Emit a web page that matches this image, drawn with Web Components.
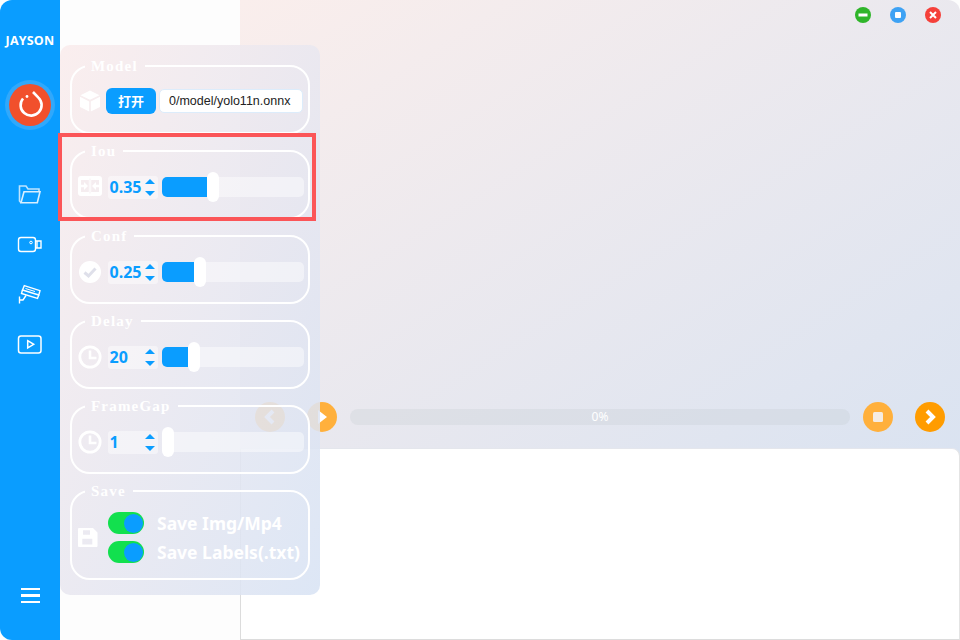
<!DOCTYPE html>
<html>
<head>
<meta charset="utf-8">
<title>Jayson</title>
<style>
  html, body { margin: 0; padding: 0; height: 100%; background: #fff; }
  body { font-family: "Noto Sans", "Noto Sans CJK SC", sans-serif; overflow: hidden; }
  app-window { width: 960px; height: 640px; }
</style>
</head>
<body>

<app-window>
  <side-bar slot="side"></side-bar>
  <settings-panel slot="panel">
    <param-group title="Model">
      <model-row></model-row>
    </param-group>
    <param-group title="Iou" highlight>
      <param-row icon="iou" value="0.35" ratio="0.35"></param-row>
    </param-group>
    <param-group title="Conf">
      <param-row icon="check" value="0.25" ratio="0.25"></param-row>
    </param-group>
    <param-group title="Delay">
      <param-row icon="clock" value="20" ratio="0.2"></param-row>
    </param-group>
    <param-group title="FrameGap">
      <param-row icon="clock" value="1" ratio="0"></param-row>
    </param-group>
    <param-group title="Save" tall>
      <save-row></save-row>
    </param-group>
  </settings-panel>
  <win-controls slot="controls"></win-controls>
  <player-bar slot="player"></player-bar>
  <log-panel slot="log"></log-panel>
</app-window>

<script>
const BLUE = '#0a9dff';

const ICONS = {
  cube: `<svg width="24" height="24" viewBox="0 0 24 24"><path d="M12 1.500 L21.500 6.200 L12 10.800 L2.500 6.200 Z M2 7.800 L11.200 12.400 L11.200 22.500 L2 18 Z M22 7.800 L12.800 12.400 L12.800 22.500 L22 18 Z" fill="#fff"/></svg>`,
  iou: `<svg style="margin-bottom:2px" width="24" height="20" viewBox="0 0 24 20"><path fill-rule="evenodd" fill="#fff" d="M3 0 H21 Q24 0 24 3 V17 Q24 20 21 20 H3 Q0 20 0 17 V3 Q0 0 3 0 Z M3 4 V16 H10.800 V4 Z M13.200 4 V16 H21 V4 Z M11.600 2.500 V17.500 H12.400 V2.500 Z"/><path fill="#fff" d="M3 8.700 H6 V6 L10 10 L6 14 V11.300 H3 Z M21 8.700 H18 V6 L14 10 L18 14 V11.300 H21 Z"/></svg>`,
  check: `<svg width="24" height="24" viewBox="0 0 24 24"><circle cx="12" cy="12" r="11" fill="#fff"/><path d="M6.500 12.500 L10.500 16 L17.500 8.500" fill="none" stroke="#dfe0ea" stroke-width="3"/></svg>`,
  clock: `<svg width="26" height="26" viewBox="0 0 26 26"><circle cx="13" cy="13" r="11" fill="none" stroke="#fff" stroke-width="3"/><path d="M13 6 V14 H20" fill="none" stroke="#fff" stroke-width="2.800"/></svg>`,
  save: `<svg width="20" height="19" viewBox="0 0 20 19"><path fill-rule="evenodd" fill="#fff" d="M0 1 Q0 0 1 0 H15 L19.500 4.500 V18 Q19.500 19 18.500 19 H1 Q0 19 0 18 Z M5 2.300 V6.700 H12 V2.300 Z M4.300 10.700 V16.500 H14.300 V10.700 Z"/></svg>`
};

class AppWindow extends HTMLElement {
  constructor() {
    super();
    this.attachShadow({ mode: 'open' });
    this.shadowRoot.innerHTML = `
      <style>
        :host { display: grid; grid-template-columns: 60px 180px 720px; position: relative; background: #fdfdfd; }
        .main { display: flex; flex-direction: column; height: 640px; }
        .stage {
          height: 456px; flex: none; display: flex; flex-direction: column; justify-content: space-between;
          background: linear-gradient(to bottom right, #faeeec, #dae3f1);
          border-top-right-radius: 12px;
        }
        .blank { background: #fdfdfd; }
        ::slotted(settings-panel) { position: absolute; left: 60px; top: 45px; }
      </style>
      <slot name="side"></slot>
      <div class="blank"></div>
      <div class="main">
        <div class="stage">
          <slot name="controls"></slot>
          <slot name="player"></slot>
        </div>
        <slot name="log"></slot>
      </div>
      <slot name="panel"></slot>
    `;
  }
}

class SideBar extends HTMLElement {
  constructor() {
    super();
    this.attachShadow({ mode: 'open' });
    this.shadowRoot.innerHTML = `
      <style>
        :host {
          display: flex; flex-direction: column; align-items: center; width: 60px; height: 640px;
          background: ${BLUE}; border-radius: 12px 0 0 12px; color: #fff;
        }
        .name { margin-top: 33px; font: bold 12.500px/16px "Open Sans", sans-serif; letter-spacing: 0.2px; }
        .logo {
          margin-top: 35px; width: 42px; height: 42px; border-radius: 50%; background: #f1502c;
          box-shadow: 0 0 0 4px #30a8fb;
        }
        .logo svg { display: block; }
        nav { margin-top: 51px; display: flex; flex-direction: column; gap: 16px; }
        nav svg { display: block; }
        .menu { margin-top: auto; margin-bottom: 37px; width: 19px; display: flex; flex-direction: column; gap: 4px; }
        .menu i { display: block; height: 2.500px; background: #fff; }
      </style>
      <div class="name">JAYSON</div>
      <div class="logo">
        <svg width="42" height="42" viewBox="0 0 42 42">
          <path d="M24 8 L29.400 13.600 A10.500 10.500 0 1 1 14 14.500" fill="none" stroke="#fff" stroke-width="2.600"/>
          <circle cx="18" cy="12.500" r="1.400" fill="#fff"/>
        </svg>
      </div>
      <nav>
        <svg width="34" height="34" viewBox="0 0 34 34" fill="none">
          <path d="M26 14 V12 H15 L13 9 H6.500 V24 L8 25.700" stroke="#bfe4ff" stroke-width="1.600"/>
          <path d="M11 14.700 H27 L24.300 25.700 H8 Z" stroke="#d8efff" stroke-width="1.600"/>
        </svg>
        <svg width="34" height="34" viewBox="0 0 34 34" fill="none" stroke="#fff" stroke-width="1.400">
          <rect x="5.500" y="10.500" width="17" height="14" rx="2.500"/>
          <path d="M22.500 14 H24 V21 H22.500 M24 14 H28 V21 H24"/>
          <circle cx="18" cy="15.500" r="1.300" stroke-width="1"/>
        </svg>
        <svg width="34" height="34" viewBox="0 0 34 34" fill="none" stroke="#fff" stroke-width="1.400">
          <path d="M11.300 8.700 L27 13.700 L25.800 18 L9.500 13 Z"/>
          <path d="M9.500 13 L8.500 16.500 L24.500 21.500 L25.800 18"/>
          <path d="M12.500 11.500 L22 14.500" stroke-width="1"/>
          <path d="M6.500 19.500 V26.500 M6.500 23 H10 L13 18.500"/>
        </svg>
        <svg width="34" height="34" viewBox="0 0 34 34" fill="none" stroke="#fff" stroke-width="1.500">
          <rect x="5.500" y="9" width="22.500" height="17" rx="2.500"/>
          <path d="M14.700 13.700 L20.700 17.300 L14.700 21 Z"/>
        </svg>
      </nav>
      <div class="menu"><i></i><i></i><i></i></div>
    `;
  }
}

class SettingsPanel extends HTMLElement {
  constructor() {
    super();
    this.attachShadow({ mode: 'open' });
    this.shadowRoot.innerHTML = `
      <style>
        :host {
          display: flex; flex-direction: column; gap: 8px; box-sizing: border-box;
          width: 260px; height: 550px; padding: 12px 10px 0;
          border-radius: 10px;
          background: linear-gradient(to bottom right, rgba(250,236,236,.88), rgba(216,227,244,.88));
        }
      </style>
      <slot></slot>
    `;
  }
}

class ParamGroup extends HTMLElement {
  constructor() {
    super();
    this.attachShadow({ mode: 'open' });
  }

  connectedCallback() {
    this.shadowRoot.innerHTML = `
      <style>
        :host { display: block; position: relative; height: 77px; flex: none; }
        :host([tall]) { height: 98px; }
        fieldset {
          box-sizing: border-box; margin: 0; height: 100%; padding: 0 4px 0 6px;
          border: 2px solid #fff; border-radius: 20px; min-width: 0;
        }
        legend {
          margin-left: 7px; padding: 2px 7px 2px 6px;
          font: bold 15px/14px "Liberation Serif", serif; letter-spacing: 1.200px; color: #fff;
        }
        .body { display: flex; align-items: center; height: 54px; }
        :host([tall]) .body { height: 75px; }
        :host([highlight])::after {
          content: ""; position: absolute; left: -12px; right: -6px; top: -9px; height: 88px;
          border: 4px solid #fb5558; box-sizing: border-box; pointer-events: none;
        }
      </style>
      <fieldset>
        <legend>${this.getAttribute('title')}</legend>
        <div class="body"><slot></slot></div>
      </fieldset>
    `;
  }
}

class ModelRow extends HTMLElement {
  constructor() {
    super();
    this.attachShadow({ mode: 'open' });
    this.shadowRoot.innerHTML = `
      <style>
        :host { display: flex; align-items: center; width: 100%; margin-bottom: 2px; }
        .icon { width: 24px; height: 24px; margin-right: 4px; flex: none; }
        .open {
          width: 50px; height: 26px; border-radius: 6px; background: ${BLUE}; color: #fff; flex: none;
          font: bold 13px/26px "Noto Sans CJK SC", sans-serif; text-align: center;
        }
        .path {
          margin-left: 3px; box-sizing: border-box; width: 144px; height: 24px; padding-left: 9px; flex: none;
          background: #fff; border: 1px solid #dcecfb; border-radius: 5px;
          font: 12.500px/22px "Liberation Sans", sans-serif; color: #222;
        }
      </style>
      <div class="icon">${ICONS.cube}</div>
      <div class="open">打开</div>
      <div class="path">0/model/yolo11n.onnx</div>
    `;
  }
}

class ParamRow extends HTMLElement {
  constructor() {
    super();
    this.attachShadow({ mode: 'open' });
  }

  connectedCallback() {
    const icon = this.getAttribute('icon');
    const value = this.getAttribute('value');
    const ratio = parseFloat(this.getAttribute('ratio'));
    this.shadowRoot.innerHTML = `
      <style>
        :host { display: flex; align-items: center; width: 100%; }
        .icon { width: 24px; height: 26px; flex: none; display: flex; align-items: center; justify-content: center; margin-right: 6px; }
        .spin {
          box-sizing: border-box; width: 50px; height: 23px; padding: 0 3.500px 0 1.500px; flex: none;
          display: flex; align-items: center; justify-content: space-between;
          background: rgba(255,255,255,.45); border-radius: 3px;
          font: bold 16px/23px "Noto Sans", sans-serif; color: ${BLUE};
        }
        .arrows { display: flex; flex-direction: column; gap: 7px; }
        .arrows i { display: block; width: 0; height: 0; border: 5.500px solid transparent; border-top-width: 0; border-bottom: 5.500px solid ${BLUE}; }
        .arrows i + i { transform: scaleY(-1); }
        .track {
          margin-left: 4px; width: 142px; height: 20px; flex: none; display: flex; align-items: center;
          background: rgba(255,255,255,.45); border-radius: 5px;
        }
        .fill { width: ${Math.floor(ratio * 130)}px; height: 100%; flex: none; background: ${BLUE}; border-radius: 5px 0 0 5px; }
        .thumb { width: 12px; height: 30px; background: #fff; border-radius: 6px; flex: none; }
      </style>
      <div class="icon">${ICONS[icon]}</div>
      <div class="spin"><span>${value}</span><div class="arrows"><i></i><i></i></div></div>
      <div class="track"><div class="fill"></div><div class="thumb"></div></div>
    `;
  }
}

class ToggleSwitch extends HTMLElement {
  constructor() {
    super();
    this.attachShadow({ mode: 'open' });
    this.shadowRoot.innerHTML = `
      <style>
        :host { display: flex; align-items: center; gap: 13px; height: 22px; color: #fff; font: bold 17.500px/22px "Noto Sans", sans-serif; white-space: nowrap; }
        .sw { box-sizing: border-box; width: 36px; height: 22px; padding: 1.500px; display: flex; justify-content: flex-end; background: #12e04e; border-radius: 11px; flex: none; }
        .sw i { display: block; width: 19px; height: 19px; border-radius: 50%; background: ${BLUE}; }
      </style>
      <div class="sw"><i></i></div>
      <slot></slot>
    `;
  }
}

class SaveRow extends HTMLElement {
  constructor() {
    super();
    this.attachShadow({ mode: 'open' });
    this.shadowRoot.innerHTML = `
      <style>
        :host { display: flex; align-items: center; width: 100%; }
        .icon { width: 20px; height: 19px; margin: 0 10px 1px 0; flex: none; }
        .col { display: flex; flex-direction: column; gap: 7px; }
      </style>
      <div class="icon">${ICONS.save}</div>
      <div class="col">
        <toggle-switch>Save Img/Mp4</toggle-switch>
        <toggle-switch>Save Labels(.txt)</toggle-switch>
      </div>
    `;
  }
}

class WinControls extends HTMLElement {
  constructor() {
    super();
    this.attachShadow({ mode: 'open' });
    this.shadowRoot.innerHTML = `
      <style>
        :host { display: flex; justify-content: flex-end; gap: 19px; padding: 7px 19px 0 0; }
        span { width: 16px; height: 16px; border-radius: 50%; display: flex; align-items: center; justify-content: center; }
        svg { display: block; }
      </style>
      <span style="background:#2fb52a"><svg width="10" height="10"><rect x="0.500" y="3.500" width="9" height="3" fill="#fff"/></svg></span>
      <span style="background:#3ea2f4"><svg width="8" height="8"><rect x="1" y="1" width="6" height="6" rx="1" fill="#fff"/></svg></span>
      <span style="background:#f5403a"><svg width="8" height="8"><path d="M1 1 L7 7 M7 1 L1 7" stroke="#fff" stroke-width="2"/></svg></span>
    `;
  }
}

class PlayerBar extends HTMLElement {
  constructor() {
    super();
    this.attachShadow({ mode: 'open' });
    this.shadowRoot.innerHTML = `
      <style>
        :host { display: flex; align-items: center; padding: 0 15px 24px; }
        .btn { width: 30px; height: 30px; border-radius: 50%; display: flex; align-items: center; justify-content: center; flex: none; }
        .soft { background: #ffb03c; }
        .hard { background: #ff9c00; }
        .progress {
          margin: 0 13px; flex: 1; height: 16px; border-radius: 8px; background: rgba(190,198,205,.25);
          color: #fff; font: 12px/16px "Noto Sans", sans-serif; text-align: center;
        }
        .gap { width: 22px; flex: none; }
        svg { display: block; }
      </style>
      <div class="btn soft"><svg width="14" height="16"><path d="M10 2 L4 8 L10 14" fill="none" stroke="#fff" stroke-width="4"/></svg></div>
      <div class="gap"></div>
      <div class="btn soft"><svg width="14" height="16"><path d="M3 1 L12 8 L3 15 Z" fill="#fff"/></svg></div>
      <div class="progress">0%</div>
      <div class="btn soft"><svg width="12" height="12"><rect x="1" y="1" width="10" height="10" rx="1.500" fill="#f5ece2"/></svg></div>
      <div class="gap"></div>
      <div class="btn hard"><svg width="14" height="16"><path d="M4 2 L10 8 L4 14" fill="none" stroke="#fff" stroke-width="4"/></svg></div>
    `;
  }
}

class LogPanel extends HTMLElement {
  constructor() {
    super();
    this.attachShadow({ mode: 'open' });
    this.shadowRoot.innerHTML = `
      <style>
        :host {
          display: block; box-sizing: border-box; height: 192px; margin-top: -8px; background: #fff;
          border: 1px solid #dcdcdc; border-top-color: #e4e6ec; border-right-color: #e4e4e4; border-radius: 0 8px 0 0;
        }
      </style>
    `;
  }
}

customElements.define('app-window', AppWindow);
customElements.define('side-bar', SideBar);
customElements.define('settings-panel', SettingsPanel);
customElements.define('param-group', ParamGroup);
customElements.define('model-row', ModelRow);
customElements.define('param-row', ParamRow);
customElements.define('toggle-switch', ToggleSwitch);
customElements.define('save-row', SaveRow);
customElements.define('win-controls', WinControls);
customElements.define('player-bar', PlayerBar);
customElements.define('log-panel', LogPanel);
</script>
</body>
</html>
